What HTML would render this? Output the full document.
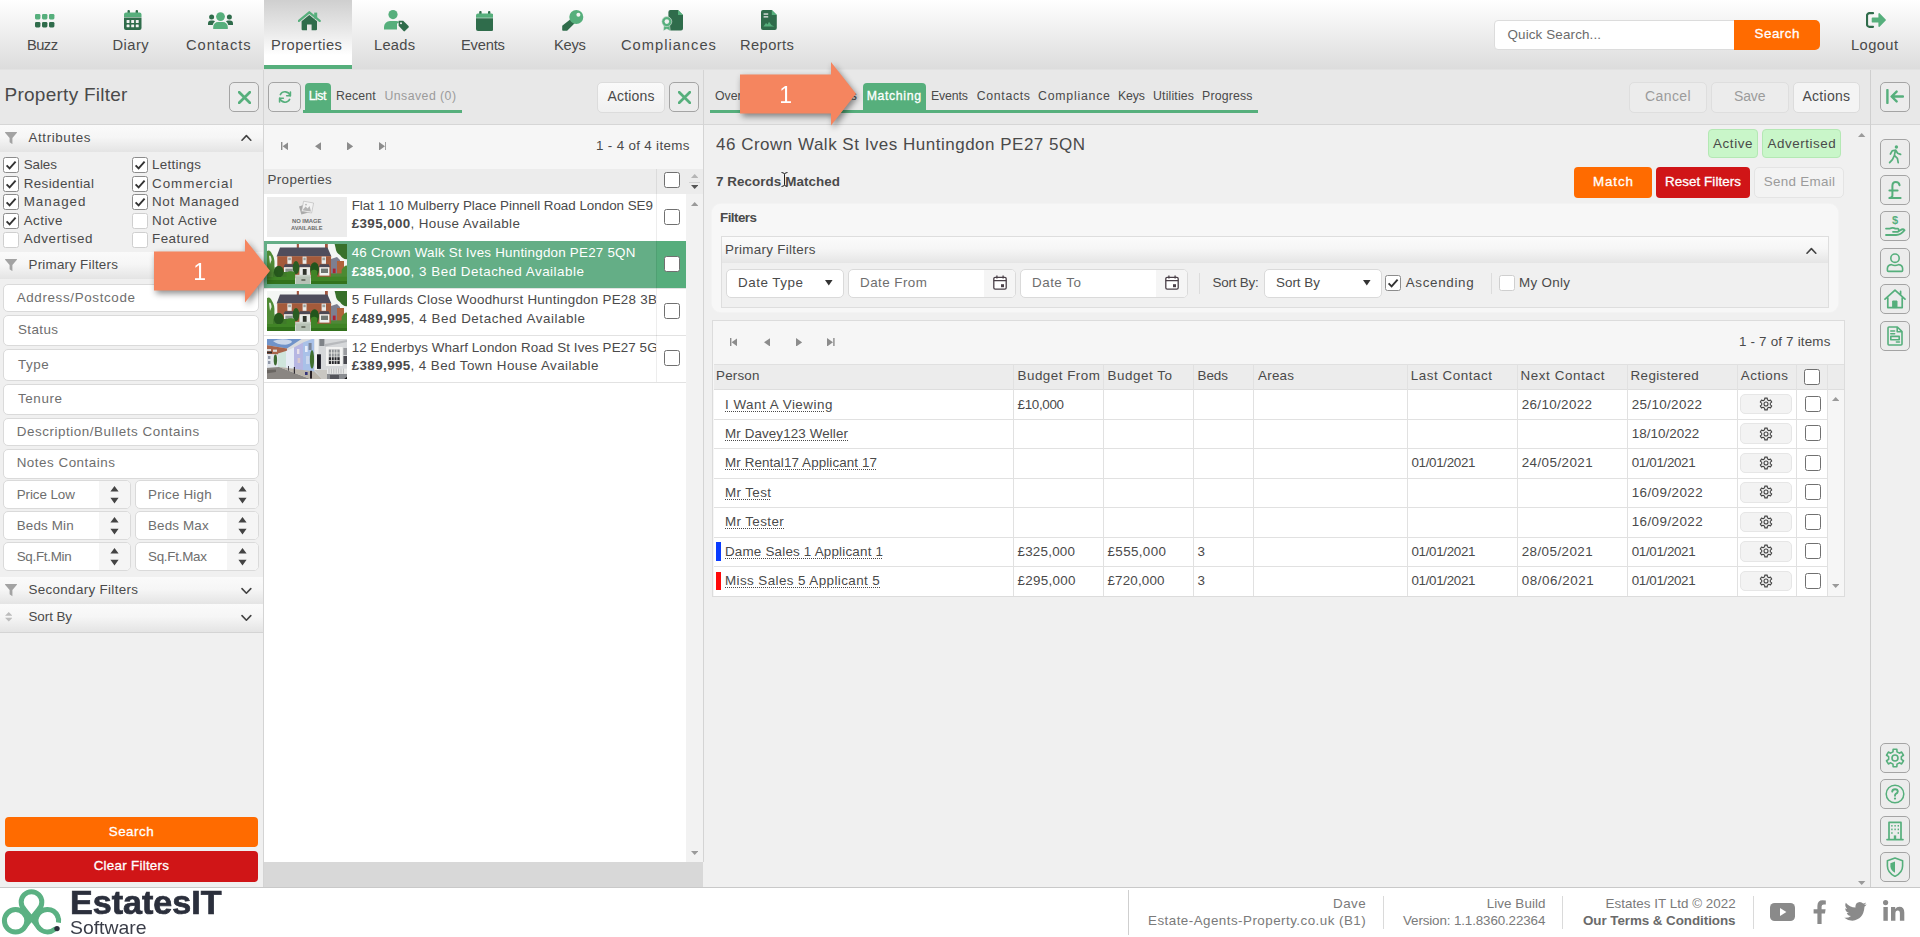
<!DOCTYPE html><html lang="en"><head><meta charset="utf-8"><title>Estates IT - Properties - Matching</title><style>
*{box-sizing:border-box;margin:0;padding:0}
html,body{width:1920px;height:937px;overflow:hidden;background:#f0f0f0;font-family:"Liberation Sans",sans-serif;color:#4a4a4a}
.a,.t,svg{position:absolute}
.t{white-space:pre;display:block}
.cb{position:absolute;width:16px;height:16px;background:#fff;border:1px solid #8c8c8c;border-radius:2.5px}
.cb.dk{border-color:#707070}
.cb.off{border-color:#cfcfcf}
.cb svg{left:1px;top:1px}
.btn{position:absolute;border-radius:5px;background:#f4f4f4;border:1px solid #dcdcdc}
.ib{position:absolute;width:30px;height:30px;border:1px solid #a4a4a4;border-radius:5px;background:#ececec}
.inp{position:absolute;background:#fff;border:1px solid #dadada;border-radius:5px}
.hd{position:absolute;left:0;width:263px;background:linear-gradient(#fafafa,#f6f6f6 45%,#e4e4e4)}
.spin{position:absolute;top:0;right:0;bottom:0;width:31px;background:#f5f5f5;border-radius:0 4px 4px 0}
.u{text-decoration:underline dotted;text-decoration-thickness:1px;text-underline-offset:2px}
</style></head><body>
<div class="a" style="left:0;top:0;width:1920px;height:69px;background:linear-gradient(#ffffff,#f6f6f6 25%,#dcdcdc 100%)"></div>
<div class="a" style="left:264px;top:0;width:88px;height:69px;background:linear-gradient(#cfcfcf,#e9e9e9 45%,#ffffff 80%)"></div>
<div class="a" style="left:264px;top:65px;width:88px;height:4px;background:#56af7c"></div>
<span class="t" style="left:27.0px;top:36px;font-size:14.7px;line-height:18px;letter-spacing:-0.56px;">Buzz</span>
<span class="t" style="left:112.5px;top:36px;font-size:14.7px;line-height:18px;letter-spacing:0.47px;">Diary</span>
<span class="t" style="left:186.0px;top:36px;font-size:14.7px;line-height:18px;letter-spacing:0.96px;">Contacts</span>
<span class="t" style="left:271.0px;top:36px;font-size:14.7px;line-height:18px;letter-spacing:0.44px;">Properties</span>
<span class="t" style="left:374.0px;top:36px;font-size:14.7px;line-height:18px;letter-spacing:0.24px;">Leads</span>
<span class="t" style="left:461.0px;top:36px;font-size:14.7px;line-height:18px;letter-spacing:-0.19px;">Events</span>
<span class="t" style="left:554.0px;top:36px;font-size:14.7px;line-height:18px;letter-spacing:-0.23px;">Keys</span>
<span class="t" style="left:621.0px;top:36px;font-size:14.7px;line-height:18px;letter-spacing:1.00px;">Compliances</span>
<span class="t" style="left:740.0px;top:36px;font-size:14.7px;line-height:18px;letter-spacing:0.42px;">Reports</span>
<span class="t" style="left:1851.0px;top:36px;font-size:14.7px;line-height:18px;letter-spacing:0.41px;">Logout</span>
<svg style="left:35px;top:14px" width="20" height="14" viewBox="0 0 20 14" ><rect x="0" y="0" width="5.4" height="5.4" rx="1.3" fill="#56af7c"/><rect x="7" y="0" width="5.4" height="5.4" rx="1.3" fill="#56af7c"/><rect x="14" y="0" width="5.4" height="5.4" rx="1.3" fill="#56af7c"/><rect x="0" y="8" width="5.4" height="5.4" rx="1.3" fill="#2f6c4b"/><rect x="7" y="8" width="5.4" height="5.4" rx="1.3" fill="#2f6c4b"/><rect x="14" y="8" width="5.4" height="5.4" rx="1.3" fill="#2f6c4b"/></svg>
<svg style="left:123.6px;top:10px" width="18" height="20" viewBox="0 0 18 20" ><rect x="3.5" y="0" width="2.4" height="5" rx="1" fill="#2f6c4b"/><rect x="11.6" y="0" width="2.4" height="5" rx="1" fill="#2f6c4b"/><path d="M0 4.5 a2 2 0 0 1 2 -2 h13.5 a2 2 0 0 1 2 2 v2.5 h-17.5z" fill="#56af7c"/><path d="M0 7.6 h17.5 v10.4 a2 2 0 0 1 -2 2 h-13.5 a2 2 0 0 1 -2 -2z" fill="#2f6c4b"/><rect x="2.6" y="10.0" width="2.9" height="2.9" rx=".5" fill="#f2f2f2"/><rect x="7.199999999999999" y="10.0" width="2.9" height="2.9" rx=".5" fill="#f2f2f2"/><rect x="11.799999999999999" y="10.0" width="2.9" height="2.9" rx=".5" fill="#f2f2f2"/><rect x="2.6" y="14.4" width="2.9" height="2.9" rx=".5" fill="#f2f2f2"/><rect x="7.199999999999999" y="14.4" width="2.9" height="2.9" rx=".5" fill="#f2f2f2"/><rect x="11.799999999999999" y="14.4" width="2.9" height="2.9" rx=".5" fill="#f2f2f2"/></svg>
<svg style="left:208px;top:11.5px" width="25" height="17" viewBox="0 0 25 17" ><circle cx="3.6" cy="5" r="2.5" fill="#2f6c4b"/><circle cx="21.4" cy="5" r="2.5" fill="#2f6c4b"/><path d="M0 13 v-1.5 a3 3 0 0 1 3 -3 h2 a3.5 3.5 0 0 1 2 .8 a6 6 0 0 0 -2.3 3.7z" fill="#2f6c4b"/><path d="M25 13 v-1.5 a3 3 0 0 0 -3 -3 h-2 a3.5 3.5 0 0 0 -2 .8 a6 6 0 0 1 2.3 3.7z" fill="#2f6c4b"/><circle cx="12.5" cy="4.6" r="4.4" fill="#56af7c"/><path d="M5.2 17 v-2 a5 5 0 0 1 5 -5 h4.6 a5 5 0 0 1 5 5 v2z" fill="#56af7c"/></svg>
<svg style="left:297.5px;top:10.5px" width="23" height="20" viewBox="0 0 23 20" ><rect x="16.2" y="1.6" width="3" height="6" fill="#56af7c"/><path d="M3.6 10.2 L11.3 3.9 L19 10.2 V18.3 a1 1 0 0 1 -1 1 H13.6 V13.6 H9 V19.3 H4.6 a1 1 0 0 1 -1 -1z" fill="#2f6c4b"/><path d="M.9 9.9 L11.3 1.3 L21.7 9.9" fill="none" stroke="#56af7c" stroke-width="2.3" stroke-linecap="round" stroke-linejoin="round"/></svg>
<svg style="left:383.7px;top:9.8px" width="26" height="22" viewBox="0 0 26 22" ><circle cx="9" cy="4.6" r="4.6" fill="#56af7c"/><path d="M0 19.5 v-2.5 a6 6 0 0 1 6 -6 h6 a6 6 0 0 1 3.2 1 L13 13.8 v5.7z" fill="#56af7c"/><path d="M14.6 10.8 h4.6 l5.3 5.3 a1 1 0 0 1 0 1.4 l-3.6 3.6 a1 1 0 0 1 -1.4 0 l-4.9 -5.3z" fill="#2f6c4b"/><circle cx="17" cy="13.2" r="1" fill="#eee"/></svg>
<svg style="left:475.6px;top:10.6px" width="17.6" height="20" viewBox="0 0 17.6 20" ><rect x="3.2" y="0" width="2.4" height="5" rx="1" fill="#2f6c4b"/><rect x="12" y="0" width="2.4" height="5" rx="1" fill="#2f6c4b"/><path d="M0 4.6 a2 2 0 0 1 2 -2 h13.6 a2 2 0 0 1 2 2 v2.2 h-17.6z" fill="#56af7c"/><path d="M0 7.2 h17.6 v10.8 a2 2 0 0 1 -2 2 h-13.6 a2 2 0 0 1 -2 -2z" fill="#2f6c4b"/></svg>
<svg style="left:562px;top:9.6px" width="21.5" height="21" viewBox="0 0 21.5 21" ><path d="M9.4 8.6 l4 4 l-8 7.8 a1 1 0 0 1 -.7 .3 h-3.7 a.8 .8 0 0 1 -.8 -.8 v-3.6 a1 1 0 0 1 .3 -.7z" fill="#2f6c4b"/><circle cx="14.3" cy="7" r="7" fill="#56af7c"/><circle cx="16.4" cy="4.8" r="2" fill="#f4f4f4"/></svg>
<svg style="left:660.6px;top:10px" width="22" height="21" viewBox="0 0 22 21" ><path d="M7.4 2 a2 2 0 0 1 2 -2 h7.6 l5 5 v13.5 a2 2 0 0 1 -2 2 h-10.6 a2 2 0 0 1 -2 -2z" fill="#2f6c4b"/><path d="M17 0 l5 5 h-5z" fill="#56af7c"/><path d="M3.2 14 l-.9 6.8 l3.5 -1.7 l3.5 1.7 l-.9 -6.8z" fill="#56af7c" stroke="#e6e6e6" stroke-width=".5"/><circle cx="5.8" cy="11.6" r="5" fill="#56af7c" stroke="#e6e6e6" stroke-width=".6"/><circle cx="5.8" cy="11.6" r="2.3" fill="#f0f0f0"/></svg>
<svg style="left:761px;top:10px" width="16" height="20" viewBox="0 0 16 20" ><path d="M0 2 a2 2 0 0 1 2 -2 h8.8 l5 5 v13 a2 2 0 0 1 -2 2 h-11.8 a2 2 0 0 1 -2 -2z" fill="#2f6c4b"/><path d="M10.8 0 l5 5 h-5z" fill="#56af7c"/><rect x="2.6" y="3.4" width="4.6" height="1.3" fill="#e8e8e8"/><rect x="2.6" y="6.2" width="4.6" height="1.3" fill="#e8e8e8"/><path d="M2.4 16.6 l2.6 -3.6 l1.6 1.6 l1.4 -2.8 l2.6 3.4 l2.8 1.4z" fill="#56af7c"/></svg>
<svg style="left:1866px;top:12.2px" width="20.5" height="16" viewBox="0 0 20.5 16" ><path d="M7 1.2 H3.4 a2.4 2.4 0 0 0 -2.4 2.4 v8.8 a2.4 2.4 0 0 0 2.4 2.4 H7" fill="none" stroke="#2f6c4b" stroke-width="2.2" stroke-linecap="round"/><path d="M6.6 5.4 h5.8 v-3.6 a.7 .7 0 0 1 1.2 -.5 l6.1 6.1 a.9 .9 0 0 1 0 1.2 l-6.1 6.1 a.7 .7 0 0 1 -1.2 -.5 v-3.6 h-5.8 a.9 .9 0 0 1 -.9 -.9 v-3.4 a.9 .9 0 0 1 .9 -.9z" fill="#56af7c"/></svg>
<div class="a" style="left:1494px;top:20px;width:241px;height:30px;background:#fff;border:1px solid #dcdcdc;border-radius:4px 0 0 4px"></div>
<span class="t" style="left:1507.5px;top:26px;font-size:13.4px;line-height:17px;letter-spacing:0.14px;color:#6b6b6b;">Quick Search...</span>
<div class="a" style="left:1734px;top:20px;width:86px;height:30px;background:#ff6b00;border-radius:0 5px 5px 0"></div>
<span class="t" style="left:1754.5px;top:25px;font-size:13.4px;line-height:17px;letter-spacing:0.51px;-webkit-text-stroke:.3px;color:#fff;">Search</span>
<div class="a" style="left:0;top:69px;width:1920px;height:56px;background:#e8e8e8;border-top:1px solid #e2e2e2;border-bottom:1px solid #d6d6d6"></div>
<span class="t" style="left:4.5px;top:83px;font-size:19px;line-height:24px;letter-spacing:0.26px;">Property Filter</span>
<div class="ib" style="left:229px;top:82px"><svg style="left:8px;top:8px" width="13" height="13" viewBox="0 0 13 13"><path d="M1.2 1.2 L11.8 11.8 M11.8 1.2 L1.2 11.8" stroke="#56af7c" stroke-width="2.7" stroke-linecap="round"/></svg></div>
<div class="ib" style="left:268px;top:82px;width:33px"><svg style="left:8.5px;top:6.5px" width="14" height="14" viewBox="-.5 -.5 15 15" fill="none" stroke="#56af7c" stroke-width="1.7" stroke-linecap="round" stroke-linejoin="round"><path d="M12.6 5.6 A5.8 5.8 0 0 0 2 4.4 M1.4 8.4 A5.8 5.8 0 0 0 12 9.6"/><path d="M12.8 1.6 v4 h-4 M1.2 12.4 v-4 h4"/></svg></div>
<div class="a" style="left:303px;top:110px;width:159px;height:3px;background:#56af7c"></div>
<div class="a" style="left:304.5px;top:83px;width:26.5px;height:28px;background:#56af7c;border-radius:4px 4px 0 0"></div>
<span class="t" style="left:308.7px;top:89px;font-size:12.3px;line-height:15px;letter-spacing:-0.51px;-webkit-text-stroke:.3px;color:#fff;">List</span>
<span class="t" style="left:336.0px;top:89px;font-size:12.3px;line-height:15px;letter-spacing:0.15px;">Recent</span>
<span class="t" style="left:384.5px;top:89px;font-size:12.3px;line-height:15px;letter-spacing:0.45px;color:#9b9b9b;">Unsaved (0)</span>
<div class="btn" style="left:597px;top:81.5px;width:67.5px;background:linear-gradient(#fafafa,#f0f0f0);height:31px"></div>
<span class="t" style="left:607.5px;top:87px;font-size:14px;line-height:18px;letter-spacing:0.18px;">Actions</span>
<div class="ib" style="left:669px;top:82px"><svg style="left:8px;top:8px" width="13" height="13" viewBox="0 0 13 13"><path d="M1.2 1.2 L11.8 11.8 M11.8 1.2 L1.2 11.8" stroke="#56af7c" stroke-width="2.7" stroke-linecap="round"/></svg></div>
<div class="a" style="left:710px;top:110px;width:547.5px;height:3px;background:#56af7c"></div>
<div class="a" style="left:863px;top:83px;width:62.7px;height:28px;background:#56af7c;border-radius:4px 4px 0 0"></div>
<span class="t" style="left:715.0px;top:89px;font-size:12.3px;line-height:15px;letter-spacing:-0.04px;">Overview</span>
<span class="t" style="left:774.0px;top:89px;font-size:12.3px;line-height:15px;letter-spacing:0.23px;">Details</span>
<span class="t" style="left:821.0px;top:89px;font-size:12.3px;line-height:15px;letter-spacing:-0.74px;">Rooms</span>
<span class="t" style="left:931.0px;top:89px;font-size:12.3px;line-height:15px;letter-spacing:-0.12px;">Events</span>
<span class="t" style="left:976.7px;top:89px;font-size:12.3px;line-height:15px;letter-spacing:0.68px;">Contacts</span>
<span class="t" style="left:1038.0px;top:89px;font-size:12.3px;line-height:15px;letter-spacing:0.78px;">Compliance</span>
<span class="t" style="left:1118.0px;top:89px;font-size:12.3px;line-height:15px;letter-spacing:-0.12px;">Keys</span>
<span class="t" style="left:1153.0px;top:89px;font-size:12.3px;line-height:15px;letter-spacing:0.17px;">Utilities</span>
<span class="t" style="left:1202.0px;top:89px;font-size:12.3px;line-height:15px;letter-spacing:0.18px;">Progress</span>
<span class="t" style="left:866.7px;top:89px;font-size:12.3px;line-height:15px;letter-spacing:0.63px;-webkit-text-stroke:.3px;color:#fff;">Matching</span>
<div class="btn" style="left:1629px;top:81.5px;width:78px;height:31px;background:#ececec;border-color:#dedede"></div>
<span class="t" style="left:1645.0px;top:87px;font-size:14px;line-height:18px;letter-spacing:0.42px;color:#9b9b9b;">Cancel</span>
<div class="btn" style="left:1710.7px;top:81.5px;width:78.29999999999995px;height:31px;background:#ececec;border-color:#dedede"></div>
<span class="t" style="left:1734.0px;top:87px;font-size:14px;line-height:18px;letter-spacing:-0.14px;color:#9b9b9b;">Save</span>
<div class="btn" style="left:1792.5px;top:81.5px;width:67.0px;height:31px;"></div>
<span class="t" style="left:1802.5px;top:87px;font-size:14px;line-height:18px;letter-spacing:0.26px;">Actions</span>
<div class="a" style="left:263px;top:70px;width:1px;height:817px;background:#d4d4d4"></div>
<div class="a" style="left:703px;top:70px;width:1px;height:792px;background:#d4d4d4"></div>
<div class="a" style="left:1870px;top:70px;width:1px;height:817px;background:#cfcfcf"></div>
<div class="hd" style="top:125px;height:27px"></div>
<svg style="left:4.5px;top:131.70000000000002px" width="12" height="12.5" viewBox="0 0 12 12.5" ><path d="M.4 0 h11.2 a.4 .4 0 0 1 .3 .7 L7.4 6 v6.2 l-2.8 -2 V6 L.1 .7 A.4 .4 0 0 1 .4 0z" fill="#a3a3a3"/></svg>
<span class="t" style="left:28.5px;top:129px;font-size:13.4px;line-height:17px;letter-spacing:0.60px;">Attributes</span>
<svg style="left:240.5px;top:133.70000000000002px" width="11" height="8" viewBox="0 0 11 8"><path d="M1 6.2 L5.4 1.6 L9.8 6.2" fill="none" stroke="#444" stroke-width="1.6" stroke-linecap="round" stroke-linejoin="round"/></svg>
<div class="cb" style="left:3px;top:157.0px"><svg width="12" height="12" viewBox="0 0 12 12"><path d="M1.6 6.4 L4.6 9.4 L10.6 2.6" fill="none" stroke="#333" stroke-width="1.9"/></svg></div>
<span class="t" style="left:23.7px;top:156px;font-size:13.4px;line-height:17px;letter-spacing:-0.06px;">Sales</span>
<div class="cb" style="left:132px;top:157.0px"><svg width="12" height="12" viewBox="0 0 12 12"><path d="M1.6 6.4 L4.6 9.4 L10.6 2.6" fill="none" stroke="#333" stroke-width="1.9"/></svg></div>
<span class="t" style="left:152.0px;top:156px;font-size:13.4px;line-height:17px;letter-spacing:0.30px;">Lettings</span>
<div class="cb" style="left:3px;top:175.5px"><svg width="12" height="12" viewBox="0 0 12 12"><path d="M1.6 6.4 L4.6 9.4 L10.6 2.6" fill="none" stroke="#333" stroke-width="1.9"/></svg></div>
<span class="t" style="left:23.7px;top:175px;font-size:13.4px;line-height:17px;letter-spacing:0.40px;">Residential</span>
<div class="cb" style="left:132px;top:175.5px"><svg width="12" height="12" viewBox="0 0 12 12"><path d="M1.6 6.4 L4.6 9.4 L10.6 2.6" fill="none" stroke="#333" stroke-width="1.9"/></svg></div>
<span class="t" style="left:152.0px;top:175px;font-size:13.4px;line-height:17px;letter-spacing:1.00px;">Commercial</span>
<div class="cb" style="left:3px;top:194.0px"><svg width="12" height="12" viewBox="0 0 12 12"><path d="M1.6 6.4 L4.6 9.4 L10.6 2.6" fill="none" stroke="#333" stroke-width="1.9"/></svg></div>
<span class="t" style="left:23.7px;top:193px;font-size:13.4px;line-height:17px;letter-spacing:0.99px;">Managed</span>
<div class="cb" style="left:132px;top:194.0px"><svg width="12" height="12" viewBox="0 0 12 12"><path d="M1.6 6.4 L4.6 9.4 L10.6 2.6" fill="none" stroke="#333" stroke-width="1.9"/></svg></div>
<span class="t" style="left:152.0px;top:193px;font-size:13.4px;line-height:17px;letter-spacing:0.65px;">Not Managed</span>
<div class="cb" style="left:3px;top:213.0px"><svg width="12" height="12" viewBox="0 0 12 12"><path d="M1.6 6.4 L4.6 9.4 L10.6 2.6" fill="none" stroke="#333" stroke-width="1.9"/></svg></div>
<span class="t" style="left:23.7px;top:212px;font-size:13.4px;line-height:17px;letter-spacing:0.46px;">Active</span>
<div class="cb off" style="left:132px;top:213.0px"></div>
<span class="t" style="left:152.0px;top:212px;font-size:13.4px;line-height:17px;letter-spacing:0.52px;">Not Active</span>
<div class="cb off" style="left:3px;top:231.5px"></div>
<span class="t" style="left:23.7px;top:230px;font-size:13.4px;line-height:17px;letter-spacing:0.61px;">Advertised</span>
<div class="cb off" style="left:132px;top:231.5px"></div>
<span class="t" style="left:152.0px;top:230px;font-size:13.4px;line-height:17px;letter-spacing:0.48px;">Featured</span>
<div class="hd" style="top:251.5px;height:27px"></div>
<svg style="left:4.5px;top:258.79999999999995px" width="12" height="12.5" viewBox="0 0 12 12.5" ><path d="M.4 0 h11.2 a.4 .4 0 0 1 .3 .7 L7.4 6 v6.2 l-2.8 -2 V6 L.1 .7 A.4 .4 0 0 1 .4 0z" fill="#a3a3a3"/></svg>
<span class="t" style="left:28.5px;top:256px;font-size:13.4px;line-height:17px;letter-spacing:0.22px;">Primary Filters</span>
<div class="inp" style="left:3px;top:283.5px;width:256px;height:28.5px"></div>
<span class="t" style="left:16.7px;top:289px;font-size:13.4px;line-height:17px;letter-spacing:0.64px;color:#6e6e6e;">Address/Postcode</span>
<div class="inp" style="left:3px;top:314.5px;width:256px;height:31.5px"></div>
<span class="t" style="left:18.0px;top:321px;font-size:13.4px;line-height:17px;letter-spacing:0.40px;color:#6e6e6e;">Status</span>
<div class="inp" style="left:3px;top:349px;width:256px;height:32px"></div>
<span class="t" style="left:18.0px;top:356px;font-size:13.4px;line-height:17px;letter-spacing:0.55px;color:#6e6e6e;">Type</span>
<div class="inp" style="left:3px;top:383.5px;width:256px;height:31.5px"></div>
<span class="t" style="left:18.0px;top:390px;font-size:13.4px;line-height:17px;letter-spacing:0.61px;color:#6e6e6e;">Tenure</span>
<div class="inp" style="left:3px;top:417.7px;width:256px;height:28.80000000000001px"></div>
<span class="t" style="left:16.7px;top:423px;font-size:13.4px;line-height:17px;letter-spacing:0.56px;color:#6e6e6e;">Description/Bullets Contains</span>
<div class="inp" style="left:3px;top:448.5px;width:256px;height:30.0px"></div>
<span class="t" style="left:16.7px;top:454px;font-size:13.4px;line-height:17px;letter-spacing:0.51px;color:#6e6e6e;">Notes Contains</span>
<div class="inp" style="left:3px;top:480.0px;width:128px;height:29px"><div class="spin"><svg style="left:10.6px;top:4.6px" width="9" height="18" viewBox="0 0 9 18"><path d="M4.5 0 L8.6 5.6 H.4z M4.5 17.4 L8.6 11.8 H.4z" fill="#444"/></svg></div></div>
<div class="inp" style="left:135px;top:480.0px;width:124px;height:29px"><div class="spin"><svg style="left:10.6px;top:4.6px" width="9" height="18" viewBox="0 0 9 18"><path d="M4.5 0 L8.6 5.6 H.4z M4.5 17.4 L8.6 11.8 H.4z" fill="#444"/></svg></div></div>
<span class="t" style="left:16.7px;top:486px;font-size:13.4px;line-height:17px;letter-spacing:-0.07px;color:#6e6e6e;">Price Low</span>
<span class="t" style="left:148.0px;top:486px;font-size:13.4px;line-height:17px;letter-spacing:0.21px;color:#6e6e6e;">Price High</span>
<div class="inp" style="left:3px;top:511.2px;width:128px;height:29px"><div class="spin"><svg style="left:10.6px;top:4.6px" width="9" height="18" viewBox="0 0 9 18"><path d="M4.5 0 L8.6 5.6 H.4z M4.5 17.4 L8.6 11.8 H.4z" fill="#444"/></svg></div></div>
<div class="inp" style="left:135px;top:511.2px;width:124px;height:29px"><div class="spin"><svg style="left:10.6px;top:4.6px" width="9" height="18" viewBox="0 0 9 18"><path d="M4.5 0 L8.6 5.6 H.4z M4.5 17.4 L8.6 11.8 H.4z" fill="#444"/></svg></div></div>
<span class="t" style="left:16.7px;top:517px;font-size:13.4px;line-height:17px;letter-spacing:0.16px;color:#6e6e6e;">Beds Min</span>
<span class="t" style="left:148.0px;top:517px;font-size:13.4px;line-height:17px;letter-spacing:0.16px;color:#6e6e6e;">Beds Max</span>
<div class="inp" style="left:3px;top:542.2px;width:128px;height:29px"><div class="spin"><svg style="left:10.6px;top:4.6px" width="9" height="18" viewBox="0 0 9 18"><path d="M4.5 0 L8.6 5.6 H.4z M4.5 17.4 L8.6 11.8 H.4z" fill="#444"/></svg></div></div>
<div class="inp" style="left:135px;top:542.2px;width:124px;height:29px"><div class="spin"><svg style="left:10.6px;top:4.6px" width="9" height="18" viewBox="0 0 9 18"><path d="M4.5 0 L8.6 5.6 H.4z M4.5 17.4 L8.6 11.8 H.4z" fill="#444"/></svg></div></div>
<span class="t" style="left:16.7px;top:548px;font-size:13.4px;line-height:17px;letter-spacing:-0.29px;color:#6e6e6e;">Sq.Ft.Min</span>
<span class="t" style="left:148.0px;top:548px;font-size:13.4px;line-height:17px;letter-spacing:-0.26px;color:#6e6e6e;">Sq.Ft.Max</span>
<div class="hd" style="top:576.5px;height:27px"></div>
<svg style="left:4.5px;top:584.3px" width="12" height="12.5" viewBox="0 0 12 12.5" ><path d="M.4 0 h11.2 a.4 .4 0 0 1 .3 .7 L7.4 6 v6.2 l-2.8 -2 V6 L.1 .7 A.4 .4 0 0 1 .4 0z" fill="#a3a3a3"/></svg>
<span class="t" style="left:28.5px;top:581px;font-size:13.4px;line-height:17px;letter-spacing:0.33px;">Secondary Filters</span>
<svg style="left:240.5px;top:586.6999999999999px" width="11" height="8" viewBox="0 0 11 8"><path d="M1 1.6 L5.4 6.2 L9.8 1.6" fill="none" stroke="#444" stroke-width="1.6" stroke-linecap="round" stroke-linejoin="round"/></svg>
<div class="hd" style="top:603.5px;height:28px"></div>
<svg style="left:4.5px;top:612.1px" width="7.5" height="9.6" viewBox="0 0 7.5 9.6" ><path d="M3.75 0 L7.5 3.8 H0z M3.75 9.6 L7.5 5.8 H0z" fill="#bdbdbd"/></svg>
<span class="t" style="left:28.5px;top:608px;font-size:13.4px;line-height:17px;letter-spacing:-0.07px;">Sort By</span>
<svg style="left:240.5px;top:613.5px" width="11" height="8" viewBox="0 0 11 8"><path d="M1 1.6 L5.4 6.2 L9.8 1.6" fill="none" stroke="#444" stroke-width="1.6" stroke-linecap="round" stroke-linejoin="round"/></svg>
<div class="a" style="left:0;top:631.5px;width:263px;height:1px;background:#d4d4d4"></div>
<div class="a" style="left:5px;top:816.7px;width:253px;height:30.5px;background:#ff6b00;border-radius:4px"></div>
<span class="t" style="left:108.7px;top:823px;font-size:13.4px;line-height:17px;letter-spacing:0.51px;-webkit-text-stroke:.3px;color:#fff;">Search</span>
<div class="a" style="left:5px;top:851px;width:253px;height:31px;background:#d01517;border-radius:4px"></div>
<span class="t" style="left:93.7px;top:857px;font-size:13.4px;line-height:17px;letter-spacing:0.26px;-webkit-text-stroke:.3px;color:#fff;">Clear Filters</span>
<div class="a" style="left:264px;top:125px;width:439px;height:43.5px;background:#f6f6f6"></div>
<svg style="left:280.5px;top:141.5px" width="7.6" height="8.6" viewBox="0 0 7.6 8.6" ><rect x="0" y="0" width="1.4" height="8.6" fill="#8c8c8c"/><path d="M7.6 0 V8.6 L1.6 4.3z" fill="#8c8c8c"/></svg><svg style="left:314.5px;top:141.5px" width="6.2" height="8.6" viewBox="0 0 6.2 8.6" ><path d="M6.2 0 V8.6 L0 4.3z" fill="#8c8c8c"/></svg><svg style="left:347px;top:141.5px" width="6.2" height="8.6" viewBox="0 0 6.2 8.6" ><path d="M0 0 V8.6 L6.2 4.3z" fill="#8c8c8c"/></svg><svg style="left:378.6px;top:141.5px" width="7.6" height="8.6" viewBox="0 0 7.6 8.6" ><rect x="6.2" y="0" width="1.4" height="8.6" fill="#8c8c8c"/><path d="M0 0 V8.6 L6 4.3z" fill="#8c8c8c"/></svg>
<span class="t" style="left:596.0px;top:137px;font-size:13.4px;line-height:17px;letter-spacing:0.32px;">1 - 4 of 4 items</span>
<div class="a" style="left:264px;top:168.5px;width:439px;height:25.5px;background:#ececec"></div>
<span class="t" style="left:267.5px;top:171px;font-size:13.4px;line-height:17px;letter-spacing:0.35px;">Properties</span>
<div class="a" style="left:264px;top:194px;width:422px;height:668px;background:#fff"></div>
<div class="a" style="left:686px;top:194px;width:17px;height:668px;background:#f2f2f2"></div>
<div class="a" style="left:264px;top:862px;width:439px;height:25.5px;background:#d8d8d8"></div>
<div class="a" style="left:264px;top:241px;width:422px;height:47px;background:#64ae86"></div>
<div class="a" style="left:656px;top:241px;width:30px;height:47px;background:#56ad7c"></div>
<div class="a" style="left:264px;top:287.5px;width:422px;height:1px;background:#e2e2e2"></div>
<div class="a" style="left:264px;top:334.5px;width:422px;height:1px;background:#e2e2e2"></div>
<div class="a" style="left:264px;top:381.5px;width:422px;height:1px;background:#e2e2e2"></div>
<div class="a" style="left:656px;top:168.5px;width:1px;height:213.5px;background:rgba(0,0,0,.07)"></div>
<div class="cb dk" style="left:664px;top:172px"></div>
<svg style="left:690.6px;top:174px" width="7.4" height="4" viewBox="0 0 7.4 4" ><path d="M0 4 L3.7 0 L7.4 4z" fill="#b5b5b5"/></svg>
<svg style="left:690.6px;top:185px" width="7.4" height="4" viewBox="0 0 7.4 4" ><path d="M0 0 L3.7 4 L7.4 0z" fill="#555"/></svg>
<div class="a" style="left:689px;top:181.5px;width:10.5px;height:1px;background:#d2d2d2"></div>
<svg style="left:690.6px;top:202px" width="7.4" height="4" viewBox="0 0 7.4 4" ><path d="M0 4 L3.7 0 L7.4 4z" fill="#9a9a9a"/></svg>
<svg style="left:690.6px;top:851px" width="7.4" height="4" viewBox="0 0 7.4 4" ><path d="M0 0 L3.7 4 L7.4 0z" fill="#9a9a9a"/></svg>
<div class="cb dk" style="left:664px;top:208.5px"></div>
<div class="cb dk" style="left:664px;top:255.5px"></div>
<div class="cb dk" style="left:664px;top:302.5px"></div>
<div class="cb dk" style="left:664px;top:350px"></div>
<svg style="left:267px;top:197px" width="80" height="40" viewBox="0 0 80 40" ><rect width="80" height="40" fill="#ececec"/><g transform="translate(31,3)"><path d="M1 6.4 L9.6 3.6 L12.4 12 L3.4 14.6z" fill="#a9a9a9"/><path d="M5.6 1.2 L15.6 3 L13.6 13 L3.6 11.2z" fill="#f2f2f2" stroke="#b5b5b5" stroke-width=".6"/><path d="M5 9.6 L7.6 6.6 L9.6 8.4 L11.6 6 L13 11.4 L5.2 10.4z" fill="#b5b5b5"/><circle cx="8" cy="4.6" r=".9" fill="#b5b5b5"/></g><text x="25" y="26" textLength="29.5" lengthAdjust="spacingAndGlyphs" font-family="Liberation Sans, sans-serif" font-size="5.6" font-weight="700" fill="#6b6b6b">NO IMAGE</text><text x="24" y="32.6" textLength="31.6" lengthAdjust="spacingAndGlyphs" font-family="Liberation Sans, sans-serif" font-size="5.6" font-weight="700" fill="#6b6b6b">AVAILABLE</text></svg>
<svg style="left:267px;top:244px" width="80" height="40" viewBox="0 0 80 40" ><filter id="bl" x="0" y="0" width="1" height="1"><feGaussianBlur stdDeviation=".35"/></filter><g filter="url(#bl)"><rect x="-2" y="-2" width="84" height="44" fill="#f4f6f4"/><rect x="29.8" y="-1" width="2.1" height="6" fill="#a2553f"/><rect x="58" y="-1" width="2.8" height="6" fill="#a2553f"/><path d="M9.6 12.6 L13 3.6 H60.5 L64.4 12.6z" fill="#504e5c"/><rect x="10.3" y="12.2" width="53.8" height="22" fill="#a45a3b"/><path d="M64 15 L70 13 L73 16 V34 H64z" fill="#7d7f90"/><rect x="70" y="17" width="7" height="17" fill="#b0623a"/><rect x="64" y="29.4" width="17" height="5" fill="#4f8838"/><rect x="65.8" y="24.6" width="2.8" height="4.6" fill="#ae2233"/><rect x="20.4" y="12.6" width="4.3" height="7.2" fill="#e9ecea"/><rect x="21.2" y="13.6" width="2.6999999999999997" height="2.6" fill="#9aa09c"/><rect x="35.6" y="12.6" width="3.9" height="7.2" fill="#e9ecea"/><rect x="36.4" y="13.6" width="2.3" height="2.6" fill="#9aa09c"/><rect x="54.6" y="12.6" width="4.4" height="7.2" fill="#e9ecea"/><rect x="55.4" y="13.6" width="2.8000000000000003" height="2.6" fill="#9aa09c"/><path d="M16.4 23.2 L18 20.2 H26.6 L28 23.2z M51.8 23.2 L53 20.2 H61.6 L63 23.2z M31 23.2 L33 20.2 H42.6 L44.2 23.2z" fill="#4b4956"/><rect x="17" y="23.2" width="10.4" height="8.4" fill="#eef1ef"/><rect x="52.4" y="23.2" width="10" height="8.4" fill="#eef1ef"/><rect x="18.4" y="24.6" width="7.4" height="4.2" fill="#8d948f"/><rect x="54" y="24.6" width="7" height="4.4" fill="#6f7672"/><rect x="32.4" y="23.2" width="10.8" height="10" fill="#e8ebe8"/><rect x="35.8" y="25" width="3.8" height="7.6" fill="#2e3029"/><path d="M0 7 Q3 5 5 10 Q8 14 7.4 22 Q9 30 7 40 H0z" fill="#4f8a34"/><path d="M2 12 Q4 10 4.6 16 L3 20z" fill="#e4ebe0"/><path d="M67.4 -1 H81 V15 Q76 16 73 11 Q69 9 68.6 4z" fill="#38702a"/><path d="M74.6 26 Q78 20 81 22 V34 H74.6z" fill="#4c8a30"/><ellipse cx="29" cy="23.6" rx="3.3" ry="6.6" fill="#2a5c20"/><ellipse cx="47.6" cy="25.6" rx="4.4" ry="7.4" fill="#24551c"/><rect x="6" y="28" width="14" height="6" fill="#3f7a2a"/><ellipse cx="11.8" cy="27.6" rx="4.9" ry="5.8" fill="#27591f"/><path d="M0 33 H19.4 V28.6 Q23.6 26 28 28.6 V40.5 H0z" fill="#3f8426"/><path d="M44 40.5 V27 Q47 24.6 50.3 27 V32.8 H81 V40.5z" fill="#3f8426"/><path d="M0 36 H28 V40.5 H0z M44 37 H81 V40.5 H44z" fill="#33721e"/><rect x="28.2" y="30.8" width="15.6" height="9.8" fill="#c9d2c8"/><path d="M30 40.5 v-8 M32 40.5 v-8 M34 40.5 v-8 M36 40.5 v-8 M38 40.5 v-8 M40 40.5 v-8 M42 40.5 v-8" stroke="#97a895" stroke-width=".7"/><rect x="34.4" y="35" width="4" height="2" fill="#6d7468"/></g></svg>
<svg style="left:267px;top:291px" width="80" height="40" viewBox="0 0 80 40" ><g filter="url(#bl)"><rect x="-2" y="-2" width="84" height="44" fill="#f4f6f4"/><rect x="29.8" y="-1" width="2.1" height="6" fill="#a2553f"/><rect x="58" y="-1" width="2.8" height="6" fill="#a2553f"/><path d="M9.6 12.6 L13 3.6 H60.5 L64.4 12.6z" fill="#504e5c"/><rect x="10.3" y="12.2" width="53.8" height="22" fill="#a45a3b"/><path d="M64 15 L70 13 L73 16 V34 H64z" fill="#7d7f90"/><rect x="70" y="17" width="7" height="17" fill="#b0623a"/><rect x="64" y="29.4" width="17" height="5" fill="#4f8838"/><rect x="65.8" y="24.6" width="2.8" height="4.6" fill="#ae2233"/><rect x="20.4" y="12.6" width="4.3" height="7.2" fill="#e9ecea"/><rect x="21.2" y="13.6" width="2.6999999999999997" height="2.6" fill="#9aa09c"/><rect x="35.6" y="12.6" width="3.9" height="7.2" fill="#e9ecea"/><rect x="36.4" y="13.6" width="2.3" height="2.6" fill="#9aa09c"/><rect x="54.6" y="12.6" width="4.4" height="7.2" fill="#e9ecea"/><rect x="55.4" y="13.6" width="2.8000000000000003" height="2.6" fill="#9aa09c"/><path d="M16.4 23.2 L18 20.2 H26.6 L28 23.2z M51.8 23.2 L53 20.2 H61.6 L63 23.2z M31 23.2 L33 20.2 H42.6 L44.2 23.2z" fill="#4b4956"/><rect x="17" y="23.2" width="10.4" height="8.4" fill="#eef1ef"/><rect x="52.4" y="23.2" width="10" height="8.4" fill="#eef1ef"/><rect x="18.4" y="24.6" width="7.4" height="4.2" fill="#8d948f"/><rect x="54" y="24.6" width="7" height="4.4" fill="#6f7672"/><rect x="32.4" y="23.2" width="10.8" height="10" fill="#e8ebe8"/><rect x="35.8" y="25" width="3.8" height="7.6" fill="#2e3029"/><path d="M0 7 Q3 5 5 10 Q8 14 7.4 22 Q9 30 7 40 H0z" fill="#4f8a34"/><path d="M2 12 Q4 10 4.6 16 L3 20z" fill="#e4ebe0"/><path d="M67.4 -1 H81 V15 Q76 16 73 11 Q69 9 68.6 4z" fill="#38702a"/><path d="M74.6 26 Q78 20 81 22 V34 H74.6z" fill="#4c8a30"/><ellipse cx="29" cy="23.6" rx="3.3" ry="6.6" fill="#2a5c20"/><ellipse cx="47.6" cy="25.6" rx="4.4" ry="7.4" fill="#24551c"/><rect x="6" y="28" width="14" height="6" fill="#3f7a2a"/><ellipse cx="11.8" cy="27.6" rx="4.9" ry="5.8" fill="#27591f"/><path d="M0 33 H19.4 V28.6 Q23.6 26 28 28.6 V40.5 H0z" fill="#3f8426"/><path d="M44 40.5 V27 Q47 24.6 50.3 27 V32.8 H81 V40.5z" fill="#3f8426"/><path d="M0 36 H28 V40.5 H0z M44 37 H81 V40.5 H44z" fill="#33721e"/><rect x="28.2" y="30.8" width="15.6" height="9.8" fill="#c9d2c8"/><path d="M30 40.5 v-8 M32 40.5 v-8 M34 40.5 v-8 M36 40.5 v-8 M38 40.5 v-8 M40 40.5 v-8 M42 40.5 v-8" stroke="#97a895" stroke-width=".7"/><rect x="34.4" y="35" width="4" height="2" fill="#6d7468"/></g></svg>
<svg style="left:267px;top:339px" width="80" height="40" viewBox="0 0 80 40" ><g filter="url(#bl)"><rect x="-2" y="-2" width="84" height="44" fill="#d9dbdd"/><path d="M-1 -1 H36 L20 9.6 L-1 6z" fill="#6f93c9"/><path d="M6 2 Q14 -1 24 1.4 Q27 3.4 20 5.6 Q10 6 6 2z" fill="#c9d6ea"/><path d="M-1 6 L20 9.6 V16 L-1 15z" fill="#a9654c"/><rect x="0" y="10" width="4" height="2.2" fill="#dcdcdc"/><rect x="6" y="10.6" width="4" height="2.2" fill="#dcdcdc"/><rect x="0" y="12.6" width="5" height="1.8" fill="#2a2a2a"/><path d="M-1 15 L11 15.6 V28 L-1 29z" fill="#e4e8ee"/><rect x="1" y="17" width="2.4" height="3" fill="#9098a8"/><rect x="1" y="22" width="2.4" height="3" fill="#9098a8"/><ellipse cx="8.4" cy="21" rx="1.7" ry="5.4" fill="#3d6a30"/><path d="M11 14.6 L19 12 V28.6 L11 28z" fill="#cfe5dc"/><path d="M19 12 L27 8.4 V29.6 L19 28.6z" fill="#e6ecf5"/><path d="M27 8.4 L36 3.6 V31.4 L27 29.6z" fill="#b6b6e2"/><path d="M36 3.6 L47.5 -1 V33 L36 31.4z" fill="#a9c1e8"/><rect x="30" y="10" width="2.4" height="5" fill="#e8e0ea"/><rect x="30.6" y="19" width="2.6" height="5" fill="#d9c8cc"/><rect x="38" y="7" width="2.6" height="6" fill="#e8eefa"/><rect x="41.6" y="4" width="3" height="7" fill="#7d8698"/><rect x="39" y="17" width="3.4" height="8" fill="#c9d6ee"/><ellipse cx="45" cy="20.4" rx="2.1" ry="9.4" fill="#41702f"/><rect x="47.5" y="-1" width="33.5" height="42" fill="#d6d8da"/><rect x="47.5" y="-1" width="4" height="32" fill="#f1f1f1"/><rect x="52.4" y="0" width="5" height="7" fill="#7f8388"/><rect x="59" y="8" width="16.6" height="19" fill="#f3f3f2"/><rect x="50" y="15.3" width="3.9" height="14.6" fill="#1a1a22"/><rect x="61.8" y="10.5" width="10.9" height="7.2" fill="#8d9094"/><rect x="61.8" y="18.2" width="10.9" height="6.8" fill="#25252b"/><path d="M64.5 10.5 v14.5 M67.2 10.5 v14.5 M69.9 10.5 v14.5 M61.8 14 h10.9 M61.8 21.6 h10.9" stroke="#f0f0ee" stroke-width=".8"/><rect x="76.4" y="9" width="4" height="7" fill="#9a9ca0"/><rect x="76.4" y="17" width="4" height="8" fill="#4a4a50"/><path d="M58 5 L80 1 V3 L58 7.4z" fill="#b8babd"/><rect x="60" y="29.6" width="21" height="5" fill="#e9e9e8"/><path d="M62 29.6 v5 M64.4 29.6 v5 M66.8 29.6 v5 M69.2 29.6 v5 M71.6 29.6 v5 M74 29.6 v5 M76.4 29.6 v5" stroke="#a8aaad" stroke-width=".7"/><rect x="60" y="35" width="21" height="6" fill="#8b8d91"/><rect x="63" y="36" width="9" height="5" fill="#55575c"/><path d="M76 41 L81 37 V41z" fill="#111"/><path d="M-1 29 L12 28 L46 41 H-1z" fill="#8a8682"/><path d="M-1 31 L9 30.4 L9 33 L-1 34.6z" fill="#6a6662"/><path d="M12 28 L47.5 32.4 L56 41 H46z" fill="#b9b3a9"/><path d="M47.5 31 L60 31 V41 H56z" fill="#c9c7c2"/><rect x="26.8" y="28" width="1.2" height="6.6" fill="#2e2a30"/><rect x="43" y="31.8" width="2" height="7.8" fill="#2a2426"/><rect x="21" y="27" width=".9" height="4.6" fill="#3a3640"/><rect x="38" y="33" width="2.6" height="3" fill="#34347a"/></g></svg>
<div class="a" style="left:264px;top:194px;width:392px;height:190px;overflow:hidden">
<span class="t" style="left:87.7px;top:3px;font-size:13.4px;line-height:17px;letter-spacing:-0.02px;">Flat 1 10 Mulberry Place Pinnell Road London SE9 2AB</span><span class="t" style="left:87.7px;top:21px;font-size:13.4px;line-height:17px;letter-spacing:0.39px;font-weight:700;">£395,000</span><span class="t" style="left:146.6px;top:21px;font-size:13.4px;line-height:17px;letter-spacing:0.38px;">, House Available</span>
<span class="t" style="left:87.7px;top:50px;font-size:13.4px;line-height:17px;letter-spacing:0.22px;color:#fff;">46 Crown Walk St Ives Huntingdon PE27 5QN</span><span class="t" style="left:87.7px;top:69px;font-size:13.4px;line-height:17px;letter-spacing:0.39px;font-weight:700;color:#fff;">£385,000</span><span class="t" style="left:146.6px;top:69px;font-size:13.4px;line-height:17px;letter-spacing:0.51px;color:#fff;">, 3 Bed Detached Available</span>
<span class="t" style="left:87.7px;top:97px;font-size:13.4px;line-height:17px;letter-spacing:0.26px;">5 Fullards Close Woodhurst Huntingdon PE28 3BY</span><span class="t" style="left:87.7px;top:116px;font-size:13.4px;line-height:17px;letter-spacing:0.39px;font-weight:700;">£489,995</span><span class="t" style="left:146.6px;top:116px;font-size:13.4px;line-height:17px;letter-spacing:0.55px;">, 4 Bed Detached Available</span>
<span class="t" style="left:87.7px;top:145px;font-size:13.4px;line-height:17px;letter-spacing:0.10px;">12 Enderbys Wharf London Road St Ives PE27 5GH</span><span class="t" style="left:87.7px;top:163px;font-size:13.4px;line-height:17px;letter-spacing:0.39px;font-weight:700;">£389,995</span><span class="t" style="left:146.6px;top:163px;font-size:13.4px;line-height:17px;letter-spacing:0.41px;">, 4 Bed Town House Available</span>
</div>
<span class="t" style="left:716.0px;top:134px;font-size:17px;line-height:21px;letter-spacing:0.50px;">46 Crown Walk St Ives Huntingdon PE27 5QN</span>
<span class="t" style="left:716.0px;top:173px;font-size:13.4px;line-height:17px;letter-spacing:0.07px;font-weight:700;">7 Records Matched</span>
<svg style="left:781px;top:171.5px" width="7" height="15" viewBox="0 0 7 15" ><path d="M.5 .5 Q3.5 .5 3.5 2.5 Q3.5 .5 6.5 .5 M3.5 2.5 V12.5 M.5 14.5 Q3.5 14.5 3.5 12.5 Q3.5 14.5 6.5 14.5" fill="none" stroke="#222" stroke-width="1"/></svg>
<div class="a" style="left:1708px;top:129px;width:49.5px;height:28.5px;background:#c9f6c9;border:1px solid #b4e8b4;border-radius:4px"></div>
<span class="t" style="left:1713.0px;top:135px;font-size:13.4px;line-height:17px;letter-spacing:0.60px;">Active</span>
<div class="a" style="left:1762px;top:129px;width:78.7px;height:28.5px;background:#c9f6c9;border:1px solid #b4e8b4;border-radius:4px"></div>
<span class="t" style="left:1767.5px;top:135px;font-size:13.4px;line-height:17px;letter-spacing:0.54px;">Advertised</span>
<svg style="left:1858.2px;top:132.6px" width="7.4" height="4" viewBox="0 0 7.4 4" ><path d="M0 4 L3.7 0 L7.4 4z" fill="#9a9a9a"/></svg>
<svg style="left:1858.2px;top:880.6px" width="7.4" height="4" viewBox="0 0 7.4 4" ><path d="M0 0 L3.7 4 L7.4 0z" fill="#9a9a9a"/></svg>
<div class="a" style="left:1573.7px;top:167px;width:78.3px;height:31px;background:#ff6b00;border-radius:4px"></div>
<span class="t" style="left:1593.0px;top:173px;font-size:13.4px;line-height:17px;letter-spacing:0.88px;-webkit-text-stroke:.3px;color:#fff;">Match</span>
<div class="a" style="left:1656px;top:167px;width:94px;height:31px;background:#d01517;border-radius:4px"></div>
<span class="t" style="left:1665.0px;top:173px;font-size:13.4px;line-height:17px;letter-spacing:0.07px;-webkit-text-stroke:.3px;color:#fff;">Reset Filters</span>
<div class="btn" style="left:1753.7px;top:167px;width:90.5px;height:31px;background:#f3f3f3;border-color:#e4e4e4"></div>
<span class="t" style="left:1763.7px;top:173px;font-size:13.4px;line-height:17px;letter-spacing:0.31px;color:#9b9b9b;">Send Email</span>
<div class="a" style="left:711.5px;top:203.5px;width:1126px;height:108px;background:#f7f7f7;border-radius:9px;box-shadow:0 0 2px rgba(255,255,255,.8)"></div>
<span class="t" style="left:720.0px;top:209px;font-size:13.4px;line-height:17px;letter-spacing:-0.54px;font-weight:700;">Filters</span>
<div class="a" style="left:720.5px;top:236px;width:1108.5px;height:72px;background:#f0f0f0;border:1px solid #dedede"></div>
<div class="a" style="left:721.5px;top:237px;width:1106.5px;height:26px;background:linear-gradient(#fbfbfb,#f6f6f6 45%,#e5e5e5)"></div>
<span class="t" style="left:725.0px;top:241px;font-size:13.4px;line-height:17px;letter-spacing:0.30px;">Primary Filters</span>
<svg style="left:1805.5px;top:247px" width="11" height="8" viewBox="0 0 11 8"><path d="M1 6.2 L5.4 1.6 L9.8 6.2" fill="none" stroke="#444" stroke-width="1.6" stroke-linecap="round" stroke-linejoin="round"/></svg>
<div class="inp" style="left:725.5px;top:268.7px;width:118.5px;height:29.5px"></div>
<span class="t" style="left:738.0px;top:274px;font-size:13.4px;line-height:17px;letter-spacing:0.52px;">Date Type</span>
<svg style="left:825px;top:280.4px" width="7.6" height="5.4" viewBox="0 0 7.6 5.4" ><path d="M0 0 H7.6 L3.8 5.4z" fill="#333"/></svg>
<div class="inp" style="left:848px;top:268.7px;width:168px;height:29.5px"><div class="spin" style="width:31px"></div></div>
<span class="t" style="left:860.0px;top:274px;font-size:13.4px;line-height:17px;letter-spacing:0.46px;color:#6e6e6e;">Date From</span>
<svg style="left:993px;top:275px" width="14" height="15" viewBox="0 0 14 15" ><rect x=".8" y="2.4" width="12.4" height="11.8" rx="1.4" fill="#fff" stroke="#4a4048" stroke-width="1.3"/><path d="M.8 5.6 h12.4 M3.9 .6 v3 M10.1 .6 v3" stroke="#4a4048" stroke-width="1.3"/><rect x="8" y="9.2" width="3" height="3" fill="#4a4048"/></svg>
<div class="inp" style="left:1020px;top:268.7px;width:168px;height:29.5px"><div class="spin" style="width:31px"></div></div>
<span class="t" style="left:1032.0px;top:274px;font-size:13.4px;line-height:17px;letter-spacing:0.51px;color:#6e6e6e;">Date To</span>
<svg style="left:1165px;top:275px" width="14" height="15" viewBox="0 0 14 15" ><rect x=".8" y="2.4" width="12.4" height="11.8" rx="1.4" fill="#fff" stroke="#4a4048" stroke-width="1.3"/><path d="M.8 5.6 h12.4 M3.9 .6 v3 M10.1 .6 v3" stroke="#4a4048" stroke-width="1.3"/><rect x="8" y="9.2" width="3" height="3" fill="#4a4048"/></svg>
<div class="a" style="left:1199px;top:272.5px;width:1px;height:21px;background:#dcdcdc"></div>
<span class="t" style="left:1212.5px;top:274px;font-size:13.4px;line-height:17px;letter-spacing:-0.21px;">Sort By:</span>
<div class="inp" style="left:1263.7px;top:268.7px;width:118.29999999999995px;height:29.5px"></div>
<span class="t" style="left:1276.0px;top:274px;font-size:13.4px;line-height:17px;letter-spacing:0.01px;">Sort By</span>
<svg style="left:1363px;top:280.4px" width="7.6" height="5.4" viewBox="0 0 7.6 5.4" ><path d="M0 0 H7.6 L3.8 5.4z" fill="#333"/></svg>
<div class="cb" style="left:1385px;top:275px"><svg width="12" height="12" viewBox="0 0 12 12"><path d="M1.6 6.4 L4.6 9.4 L10.6 2.6" fill="none" stroke="#333" stroke-width="1.9"/></svg></div>
<span class="t" style="left:1405.7px;top:274px;font-size:13.4px;line-height:17px;letter-spacing:0.68px;">Ascending</span>
<div class="a" style="left:1490.5px;top:272.5px;width:1px;height:21px;background:#dcdcdc"></div>
<div class="cb off" style="left:1499px;top:275px"></div>
<span class="t" style="left:1519.0px;top:274px;font-size:13.4px;line-height:17px;letter-spacing:0.31px;">My Only</span>
<div class="a" style="left:712px;top:320px;width:1132.5px;height:277px;background:#f6f6f6;border:1px solid #dcdcdc"></div>
<svg style="left:729.5px;top:337.7px" width="7.6" height="8.6" viewBox="0 0 7.6 8.6" ><rect x="0" y="0" width="1.4" height="8.6" fill="#8c8c8c"/><path d="M7.6 0 V8.6 L1.6 4.3z" fill="#8c8c8c"/></svg><svg style="left:763.7px;top:337.7px" width="6.2" height="8.6" viewBox="0 0 6.2 8.6" ><path d="M6.2 0 V8.6 L0 4.3z" fill="#8c8c8c"/></svg><svg style="left:795.7px;top:337.7px" width="6.2" height="8.6" viewBox="0 0 6.2 8.6" ><path d="M0 0 V8.6 L6.2 4.3z" fill="#8c8c8c"/></svg><svg style="left:827.4px;top:337.7px" width="7.6" height="8.6" viewBox="0 0 7.6 8.6" ><rect x="6.2" y="0" width="1.4" height="8.6" fill="#8c8c8c"/><path d="M0 0 V8.6 L6 4.3z" fill="#8c8c8c"/></svg>
<span class="t" style="left:1739.0px;top:333px;font-size:13.4px;line-height:17px;letter-spacing:0.19px;">1 - 7 of 7 items</span>
<div class="a" style="left:713.5px;top:363.5px;width:1130px;height:26px;background:#ececec;border-top:1px solid #e0e0e0;border-bottom:1px solid #dedede"></div>
<div class="a" style="left:713.5px;top:389.5px;width:1113.5px;height:206.5px;background:#fff"></div>
<div class="a" style="left:1013px;top:364px;width:1px;height:232px;background:#e1e1e1"></div>
<div class="a" style="left:1103px;top:364px;width:1px;height:232px;background:#e1e1e1"></div>
<div class="a" style="left:1193px;top:364px;width:1px;height:232px;background:#e1e1e1"></div>
<div class="a" style="left:1253px;top:364px;width:1px;height:232px;background:#e1e1e1"></div>
<div class="a" style="left:1406.7px;top:364px;width:1px;height:232px;background:#e1e1e1"></div>
<div class="a" style="left:1516.7px;top:364px;width:1px;height:232px;background:#e1e1e1"></div>
<div class="a" style="left:1626.7px;top:364px;width:1px;height:232px;background:#e1e1e1"></div>
<div class="a" style="left:1736.7px;top:364px;width:1px;height:232px;background:#e1e1e1"></div>
<div class="a" style="left:1796px;top:364px;width:1px;height:232px;background:#e1e1e1"></div>
<div class="a" style="left:1826.7px;top:364px;width:1px;height:232px;background:#e1e1e1"></div>
<span class="t" style="left:716.0px;top:367px;font-size:13.4px;line-height:17px;letter-spacing:0.21px;">Person</span>
<span class="t" style="left:1017.5px;top:367px;font-size:13.4px;line-height:17px;letter-spacing:0.50px;">Budget From</span>
<span class="t" style="left:1107.5px;top:367px;font-size:13.4px;line-height:17px;letter-spacing:0.55px;">Budget To</span>
<span class="t" style="left:1197.5px;top:367px;font-size:13.4px;line-height:17px;letter-spacing:-0.01px;">Beds</span>
<span class="t" style="left:1258.0px;top:367px;font-size:13.4px;line-height:17px;letter-spacing:0.25px;">Areas</span>
<span class="t" style="left:1410.7px;top:367px;font-size:13.4px;line-height:17px;letter-spacing:0.55px;">Last Contact</span>
<span class="t" style="left:1520.5px;top:367px;font-size:13.4px;line-height:17px;letter-spacing:0.59px;">Next Contact</span>
<span class="t" style="left:1630.5px;top:367px;font-size:13.4px;line-height:17px;letter-spacing:0.38px;">Registered</span>
<span class="t" style="left:1740.7px;top:367px;font-size:13.4px;line-height:17px;letter-spacing:0.56px;">Actions</span>
<div class="cb dk" style="left:1804px;top:369px"></div>
<span class="t u" style="left:725.0px;top:396px;font-size:13.4px;line-height:17px;letter-spacing:0.51px;">I Want A Viewing</span>
<span class="t" style="left:1017.5px;top:396px;font-size:13.4px;line-height:17px;letter-spacing:-0.32px;">£10,000</span>
<span class="t" style="left:1521.7px;top:396px;font-size:13.4px;line-height:17px;letter-spacing:0.36px;">26/10/2022</span>
<span class="t" style="left:1631.7px;top:396px;font-size:13.4px;line-height:17px;letter-spacing:0.36px;">25/10/2022</span>
<div class="btn" style="left:1740px;top:393.90000000000003px;width:51.7px;height:20.6px;background:#f3f3f3;border-color:#e6e6e6"></div>
<svg style="left:1759.1px;top:397.0px" width="14" height="14" viewBox="0 0 14 14" ><g fill="none" stroke="#444" stroke-width="1.1" stroke-linejoin="round"><circle cx="7" cy="7" r="2"/><path d="M5.64 2.82 L5.75 1.13 L8.25 1.13 L8.36 2.82 L9.94 3.73 L11.46 2.99 L12.71 5.15 L11.30 6.09 L11.30 7.91 L12.71 8.85 L11.46 11.01 L9.94 10.27 L8.36 11.18 L8.25 12.87 L5.75 12.87 L5.64 11.18 L4.06 10.27 L2.54 11.01 L1.29 8.85 L2.70 7.91 L2.70 6.09 L1.29 5.15 L2.54 2.99 L4.06 3.73z"/></g></svg>
<div class="cb dk" style="left:1805px;top:395.5px"></div>
<div class="a" style="left:713.5px;top:419.0px;width:1113.5px;height:1px;background:#e1e1e1"></div>
<span class="t u" style="left:725.0px;top:425px;font-size:13.4px;line-height:17px;letter-spacing:0.11px;">Mr Davey123 Weller</span>
<span class="t" style="left:1631.7px;top:425px;font-size:13.4px;line-height:17px;letter-spacing:0.05px;">18/10/2022</span>
<div class="btn" style="left:1740px;top:423.40000000000003px;width:51.7px;height:20.6px;background:#f3f3f3;border-color:#e6e6e6"></div>
<svg style="left:1759.1px;top:426.5px" width="14" height="14" viewBox="0 0 14 14" ><g fill="none" stroke="#444" stroke-width="1.1" stroke-linejoin="round"><circle cx="7" cy="7" r="2"/><path d="M5.64 2.82 L5.75 1.13 L8.25 1.13 L8.36 2.82 L9.94 3.73 L11.46 2.99 L12.71 5.15 L11.30 6.09 L11.30 7.91 L12.71 8.85 L11.46 11.01 L9.94 10.27 L8.36 11.18 L8.25 12.87 L5.75 12.87 L5.64 11.18 L4.06 10.27 L2.54 11.01 L1.29 8.85 L2.70 7.91 L2.70 6.09 L1.29 5.15 L2.54 2.99 L4.06 3.73z"/></g></svg>
<div class="cb dk" style="left:1805px;top:425.0px"></div>
<div class="a" style="left:713.5px;top:448.0px;width:1113.5px;height:1px;background:#e1e1e1"></div>
<span class="t u" style="left:725.0px;top:454px;font-size:13.4px;line-height:17px;letter-spacing:0.10px;">Mr Rental17 Applicant 17</span>
<span class="t" style="left:1411.5px;top:454px;font-size:13.4px;line-height:17px;letter-spacing:-0.34px;">01/01/2021</span>
<span class="t" style="left:1521.7px;top:454px;font-size:13.4px;line-height:17px;letter-spacing:0.44px;">24/05/2021</span>
<span class="t" style="left:1631.7px;top:454px;font-size:13.4px;line-height:17px;letter-spacing:-0.34px;">01/01/2021</span>
<div class="btn" style="left:1740px;top:452.65000000000003px;width:51.7px;height:20.6px;background:#f3f3f3;border-color:#e6e6e6"></div>
<svg style="left:1759.1px;top:455.75px" width="14" height="14" viewBox="0 0 14 14" ><g fill="none" stroke="#444" stroke-width="1.1" stroke-linejoin="round"><circle cx="7" cy="7" r="2"/><path d="M5.64 2.82 L5.75 1.13 L8.25 1.13 L8.36 2.82 L9.94 3.73 L11.46 2.99 L12.71 5.15 L11.30 6.09 L11.30 7.91 L12.71 8.85 L11.46 11.01 L9.94 10.27 L8.36 11.18 L8.25 12.87 L5.75 12.87 L5.64 11.18 L4.06 10.27 L2.54 11.01 L1.29 8.85 L2.70 7.91 L2.70 6.09 L1.29 5.15 L2.54 2.99 L4.06 3.73z"/></g></svg>
<div class="cb dk" style="left:1805px;top:454.5px"></div>
<div class="a" style="left:713.5px;top:477.5px;width:1113.5px;height:1px;background:#e1e1e1"></div>
<span class="t u" style="left:725.0px;top:484px;font-size:13.4px;line-height:17px;letter-spacing:0.39px;">Mr Test</span>
<span class="t" style="left:1631.7px;top:484px;font-size:13.4px;line-height:17px;letter-spacing:0.44px;">16/09/2022</span>
<div class="btn" style="left:1740px;top:482.15000000000003px;width:51.7px;height:20.6px;background:#f3f3f3;border-color:#e6e6e6"></div>
<svg style="left:1759.1px;top:485.25px" width="14" height="14" viewBox="0 0 14 14" ><g fill="none" stroke="#444" stroke-width="1.1" stroke-linejoin="round"><circle cx="7" cy="7" r="2"/><path d="M5.64 2.82 L5.75 1.13 L8.25 1.13 L8.36 2.82 L9.94 3.73 L11.46 2.99 L12.71 5.15 L11.30 6.09 L11.30 7.91 L12.71 8.85 L11.46 11.01 L9.94 10.27 L8.36 11.18 L8.25 12.87 L5.75 12.87 L5.64 11.18 L4.06 10.27 L2.54 11.01 L1.29 8.85 L2.70 7.91 L2.70 6.09 L1.29 5.15 L2.54 2.99 L4.06 3.73z"/></g></svg>
<div class="cb dk" style="left:1805px;top:484.0px"></div>
<div class="a" style="left:713.5px;top:507.0px;width:1113.5px;height:1px;background:#e1e1e1"></div>
<span class="t u" style="left:725.0px;top:513px;font-size:13.4px;line-height:17px;letter-spacing:0.39px;">Mr Tester</span>
<span class="t" style="left:1631.7px;top:513px;font-size:13.4px;line-height:17px;letter-spacing:0.44px;">16/09/2022</span>
<div class="btn" style="left:1740px;top:511.65000000000003px;width:51.7px;height:20.6px;background:#f3f3f3;border-color:#e6e6e6"></div>
<svg style="left:1759.1px;top:514.75px" width="14" height="14" viewBox="0 0 14 14" ><g fill="none" stroke="#444" stroke-width="1.1" stroke-linejoin="round"><circle cx="7" cy="7" r="2"/><path d="M5.64 2.82 L5.75 1.13 L8.25 1.13 L8.36 2.82 L9.94 3.73 L11.46 2.99 L12.71 5.15 L11.30 6.09 L11.30 7.91 L12.71 8.85 L11.46 11.01 L9.94 10.27 L8.36 11.18 L8.25 12.87 L5.75 12.87 L5.64 11.18 L4.06 10.27 L2.54 11.01 L1.29 8.85 L2.70 7.91 L2.70 6.09 L1.29 5.15 L2.54 2.99 L4.06 3.73z"/></g></svg>
<div class="cb dk" style="left:1805px;top:513.5px"></div>
<div class="a" style="left:713.5px;top:536.5px;width:1113.5px;height:1px;background:#e1e1e1"></div>
<div class="a" style="left:716px;top:542.15px;width:4.7px;height:18.4px;background:#0a3cff"></div>
<span class="t u" style="left:725.0px;top:543px;font-size:13.4px;line-height:17px;letter-spacing:0.20px;">Dame Sales 1 Applicant 1</span>
<span class="t" style="left:1017.5px;top:543px;font-size:13.4px;line-height:17px;letter-spacing:0.23px;">£325,000</span>
<span class="t" style="left:1107.5px;top:543px;font-size:13.4px;line-height:17px;letter-spacing:0.37px;">£555,000</span>
<span class="t" style="left:1197.5px;top:543px;font-size:13.4px;line-height:17px;">3</span>
<span class="t" style="left:1411.5px;top:543px;font-size:13.4px;line-height:17px;letter-spacing:-0.34px;">01/01/2021</span>
<span class="t" style="left:1521.7px;top:543px;font-size:13.4px;line-height:17px;letter-spacing:0.44px;">28/05/2021</span>
<span class="t" style="left:1631.7px;top:543px;font-size:13.4px;line-height:17px;letter-spacing:-0.34px;">01/01/2021</span>
<div class="btn" style="left:1740px;top:541.15px;width:51.7px;height:20.6px;background:#f3f3f3;border-color:#e6e6e6"></div>
<svg style="left:1759.1px;top:544.25px" width="14" height="14" viewBox="0 0 14 14" ><g fill="none" stroke="#444" stroke-width="1.1" stroke-linejoin="round"><circle cx="7" cy="7" r="2"/><path d="M5.64 2.82 L5.75 1.13 L8.25 1.13 L8.36 2.82 L9.94 3.73 L11.46 2.99 L12.71 5.15 L11.30 6.09 L11.30 7.91 L12.71 8.85 L11.46 11.01 L9.94 10.27 L8.36 11.18 L8.25 12.87 L5.75 12.87 L5.64 11.18 L4.06 10.27 L2.54 11.01 L1.29 8.85 L2.70 7.91 L2.70 6.09 L1.29 5.15 L2.54 2.99 L4.06 3.73z"/></g></svg>
<div class="cb dk" style="left:1805px;top:543.0px"></div>
<div class="a" style="left:713.5px;top:566.0px;width:1113.5px;height:1px;background:#e1e1e1"></div>
<div class="a" style="left:716px;top:571.65px;width:4.7px;height:18.4px;background:#ff0a0a"></div>
<span class="t u" style="left:725.0px;top:572px;font-size:13.4px;line-height:17px;letter-spacing:0.42px;">Miss Sales 5 Applicant 5</span>
<span class="t" style="left:1017.5px;top:572px;font-size:13.4px;line-height:17px;letter-spacing:0.30px;">£295,000</span>
<span class="t" style="left:1107.5px;top:572px;font-size:13.4px;line-height:17px;letter-spacing:0.16px;">£720,000</span>
<span class="t" style="left:1197.5px;top:572px;font-size:13.4px;line-height:17px;">3</span>
<span class="t" style="left:1411.5px;top:572px;font-size:13.4px;line-height:17px;letter-spacing:-0.34px;">01/01/2021</span>
<span class="t" style="left:1521.7px;top:572px;font-size:13.4px;line-height:17px;letter-spacing:0.55px;">08/06/2021</span>
<span class="t" style="left:1631.7px;top:572px;font-size:13.4px;line-height:17px;letter-spacing:-0.34px;">01/01/2021</span>
<div class="btn" style="left:1740px;top:570.65px;width:51.7px;height:20.6px;background:#f3f3f3;border-color:#e6e6e6"></div>
<svg style="left:1759.1px;top:573.75px" width="14" height="14" viewBox="0 0 14 14" ><g fill="none" stroke="#444" stroke-width="1.1" stroke-linejoin="round"><circle cx="7" cy="7" r="2"/><path d="M5.64 2.82 L5.75 1.13 L8.25 1.13 L8.36 2.82 L9.94 3.73 L11.46 2.99 L12.71 5.15 L11.30 6.09 L11.30 7.91 L12.71 8.85 L11.46 11.01 L9.94 10.27 L8.36 11.18 L8.25 12.87 L5.75 12.87 L5.64 11.18 L4.06 10.27 L2.54 11.01 L1.29 8.85 L2.70 7.91 L2.70 6.09 L1.29 5.15 L2.54 2.99 L4.06 3.73z"/></g></svg>
<div class="cb dk" style="left:1805px;top:572.5px"></div>
<svg style="left:1831.7px;top:397px" width="7.4" height="4" viewBox="0 0 7.4 4" ><path d="M0 4 L3.7 0 L7.4 4z" fill="#9a9a9a"/></svg>
<svg style="left:1831.7px;top:584px" width="7.4" height="4" viewBox="0 0 7.4 4" ><path d="M0 0 L3.7 4 L7.4 0z" fill="#9a9a9a"/></svg>
<div class="ib" style="left:1880px;top:82px"><svg style="left:5.0px;top:5.5px" width="18" height="15" viewBox="0 0 18 15" fill="none" stroke="#56af7c" stroke-width="1.6" stroke-linecap="round" stroke-linejoin="round"><path d="M1.4 1 V14 M17 7.5 H6 M10.6 2.6 L5.6 7.5 L10.6 12.4" stroke-width="2.4"/></svg></div>
<div class="ib" style="left:1880px;top:139px"><svg style="left:6.0px;top:4.5px" width="16" height="19" viewBox="0 0 16 19" fill="none" stroke="#56af7c" stroke-width="1.6" stroke-linecap="round" stroke-linejoin="round"><circle cx="9.4" cy="2" r="1.7" fill="#56af7c" stroke="none"/><path d="M3.4 9 L5.2 5.8 L8.6 5 L10.6 8.2 L13.6 9.4 M8.4 5.2 L7.4 10.4 L10.4 13.4 L11.2 17.6 M7.2 10.8 L5.4 14.6 L2.6 17.6" stroke-width="1.7"/></svg></div>
<div class="ib" style="left:1880px;top:175px"><svg style="left:6.0px;top:5.0px" width="16" height="18" viewBox="0 0 16 18" fill="none" stroke="#56af7c" stroke-width="1.6" stroke-linecap="round" stroke-linejoin="round"><path d="M12.6 4.2 Q12 1 8.8 1 Q5.4 1 5.4 5 V14.4 Q5.4 16.6 2.4 17 H13.6 M2.4 9.4 H10.6" stroke-width="2"/></svg></div>
<div class="ib" style="left:1880px;top:211px"><svg style="left:3.5px;top:4.0px" width="21" height="20" viewBox="0 0 21 20" fill="none" stroke="#56af7c" stroke-width="1.6" stroke-linecap="round" stroke-linejoin="round"><text x="10" y="8" font-family="Liberation Sans, sans-serif" font-size="11" font-weight="700" fill="#56af7c" stroke="none" text-anchor="middle">$</text><path d="M1 19 H11 Q16 18.6 19.6 14.2 Q18 12.2 15.4 14.2 L12.8 15.8 H8 M1 12.6 H5 Q7.6 11 10.4 12.6 H13 Q14.8 14 13 15.8" stroke-width="1.8"/></svg></div>
<div class="ib" style="left:1880px;top:248px"><svg style="left:5.0px;top:4.0px" width="18" height="20" viewBox="0 0 18 20" fill="none" stroke="#56af7c" stroke-width="1.6" stroke-linecap="round" stroke-linejoin="round"><circle cx="9" cy="5.2" r="4.2"/><path d="M1.4 17.4 V15.6 Q1.4 12 5.4 11.6 Q9 13.4 12.6 11.6 Q16.6 12 16.6 15.6 V17.4 Q16.6 18.4 15.6 18.4 H2.4 Q1.4 18.4 1.4 17.4z"/></svg></div>
<div class="ib" style="left:1880px;top:284px"><svg style="left:3.0px;top:4.0px" width="22" height="20" viewBox="0 0 22 20" fill="none" stroke="#56af7c" stroke-width="1.6" stroke-linecap="round" stroke-linejoin="round"><path d="M1 10.2 L11 1.2 L21 10.2 M3.8 8.4 V18.6 H18.2 V8.4 M16.6 2.4 V5.8" stroke-width="1.7"/><rect x="9" y="12" width="4" height="6.6" fill="#56af7c" stroke-width="1"/></svg></div>
<div class="ib" style="left:1880px;top:321px"><svg style="left:6.0px;top:4.0px" width="16" height="20" viewBox="0 0 16 20" fill="none" stroke="#56af7c" stroke-width="1.6" stroke-linecap="round" stroke-linejoin="round"><path d="M2 1 H10.4 L15 5.6 V18 Q15 19 14 19 H2 Q1 19 1 18 V2 Q1 1 2 1z M10.2 1.2 V5.8 H14.8 M3.8 5 H7.6 M3.8 7.8 H7.6 M9.4 16 H12.4"/><rect x="3.8" y="10.4" width="8.4" height="3.4"/></svg></div>
<div class="ib" style="left:1880px;top:743px"><svg style="left:4.0px;top:4.0px" width="20" height="20" viewBox="0 0 20 20" fill="none" stroke="#56af7c" stroke-width="1.6" stroke-linecap="round" stroke-linejoin="round"><circle cx="10" cy="10" r="3"/><path d="M7.99 3.82 L8.15 1.29 L11.85 1.29 L12.01 3.82 L14.35 5.17 L16.61 4.04 L18.46 7.25 L16.36 8.65 L16.36 11.35 L18.46 12.75 L16.61 15.96 L14.35 14.83 L12.01 16.18 L11.85 18.71 L8.15 18.71 L7.99 16.18 L5.65 14.83 L3.39 15.96 L1.54 12.75 L3.64 11.35 L3.64 8.65 L1.54 7.25 L3.39 4.04 L5.65 5.17z"/></svg></div>
<div class="ib" style="left:1880px;top:779px"><svg style="left:4.0px;top:4.0px" width="20" height="20" viewBox="0 0 20 20" fill="none" stroke="#56af7c" stroke-width="1.6" stroke-linecap="round" stroke-linejoin="round"><circle cx="10" cy="10" r="8.8" stroke-width="1.5"/><path d="M7.2 7.6 Q7.4 5.2 10 5.2 Q12.8 5.2 12.8 7.6 Q12.8 9.2 10.6 10 Q10 10.4 10 11.8" stroke-width="1.9"/><circle cx="10" cy="14.6" r="1.1" fill="#56af7c" stroke="none"/></svg></div>
<div class="ib" style="left:1880px;top:816px"><svg style="left:5.0px;top:4.0px" width="18" height="20" viewBox="0 0 18 20" fill="none" stroke="#56af7c" stroke-width="1.6" stroke-linecap="round" stroke-linejoin="round"><path d="M3 18.6 V1.4 H15 V18.6 M1 18.6 H17" stroke-width="1.7"/><rect x="5.2" y="4.0" width="1.4" height="1.6" fill="#56af7c" stroke="none"/><rect x="8.4" y="4.0" width="1.4" height="1.6" fill="#56af7c" stroke="none"/><rect x="11.600000000000001" y="4.0" width="1.4" height="1.6" fill="#56af7c" stroke="none"/><rect x="5.2" y="7.6" width="1.4" height="1.6" fill="#56af7c" stroke="none"/><rect x="8.4" y="7.6" width="1.4" height="1.6" fill="#56af7c" stroke="none"/><rect x="11.600000000000001" y="7.6" width="1.4" height="1.6" fill="#56af7c" stroke="none"/><rect x="5.2" y="11.2" width="1.4" height="1.6" fill="#56af7c" stroke="none"/><rect x="11.600000000000001" y="11.2" width="1.4" height="1.6" fill="#56af7c" stroke="none"/><rect x="7.8" y="14.4" width="2.4" height="4" fill="#56af7c" stroke="none"/></svg></div>
<div class="ib" style="left:1880px;top:852px"><svg style="left:5.0px;top:3.8000000000000007px" width="18" height="20.4" viewBox="0 0 18 20.4" fill="none" stroke="#56af7c" stroke-width="1.6" stroke-linecap="round" stroke-linejoin="round"><path d="M9 1 L16.6 3.8 V9 Q16.6 15.6 9 19.4 Q1.4 15.6 1.4 9 V3.8z" stroke-width="1.6"/><path d="M9 4.4 L4.4 6.2 V9.4 Q4.6 13.2 9 15.8z" fill="#56af7c" stroke="none"/></svg></div>
<div class="a" style="left:0;top:887px;width:1920px;height:50px;background:#fff;border-top:1px solid #c9c9c9"></div>
<svg style="left:0;top:885px" width="64" height="52" viewBox="0 0 64 52" fill="none" stroke="#5bb183" stroke-width="5" stroke-linecap="round"><path d="M36.5 39.5 L24.3 24.4 A10.3 10.3 0 1 1 38.7 24.4 L26.5 39.5"/><circle cx="15.6" cy="35.8" r="11.2"/><path d="M54.6 44.4 A11.2 11.2 0 0 1 39 43 M57.6 31 A11.2 11.2 0 0 0 37 31.4" /><path d="M36.6 31.8 A11.2 11.2 0 0 0 39.4 43.4" stroke-linecap="butt"/><path d="M57.4 30.6 A11.2 11.2 0 0 1 58.5 37.6" stroke-linecap="butt"/><circle cx="57" cy="43.6" r="2.7" fill="#2b2f3c" stroke="none"/></svg>
<span class="t" style="left:70.2px;top:883px;font-size:32.4px;line-height:40px;font-weight:700;color:#2b2f3c;transform-origin:0 0;transform:scaleX(1.0523);-webkit-text-stroke:.7px;">EstatesIT</span>
<span class="t" style="left:69.6px;top:917px;font-size:18.2px;line-height:23px;color:#3a3d48;transform-origin:0 0;transform:scaleX(1.0665);">Software</span>
<div class="a" style="left:1127.5px;top:890px;width:1px;height:45px;background:#cfcfcf"></div>
<span class="t" style="left:1333.0px;top:895px;font-size:13.4px;line-height:17px;letter-spacing:0.47px;color:#7a7a7a;">Dave</span>
<span class="t" style="left:1148.0px;top:912px;font-size:13.4px;line-height:17px;letter-spacing:0.46px;color:#7a7a7a;">Estate-Agents-Property.co.uk (B1)</span>
<div class="a" style="left:1382.5px;top:896px;width:1px;height:33px;background:#dadada"></div>
<span class="t" style="left:1486.7px;top:895px;font-size:13.4px;line-height:17px;letter-spacing:0.08px;color:#7a7a7a;">Live Build</span>
<span class="t" style="left:1403.0px;top:912px;font-size:13.4px;line-height:17px;letter-spacing:-0.13px;color:#7a7a7a;">Version: 1.1.8360.22364</span>
<div class="a" style="left:1561.7px;top:896px;width:1px;height:33px;background:#dadada"></div>
<span class="t" style="left:1605.6px;top:895px;font-size:13.4px;line-height:17px;letter-spacing:0.03px;color:#7a7a7a;">Estates IT Ltd © 2022</span>
<span class="t" style="left:1583.0px;top:912px;font-size:13.4px;line-height:17px;letter-spacing:-0.06px;font-weight:700;color:#6a6a6a;">Our Terms &amp; Conditions</span>
<div class="a" style="left:1752.6px;top:896px;width:1px;height:33px;background:#dadada"></div>
<svg style="left:1770px;top:903px" width="25" height="18" viewBox="0 0 25 18" ><rect width="25" height="18" rx="4.6" fill="#8a8a8a"/><path d="M10 5 L16.4 9 L10 13z" fill="#fff"/></svg>
<svg style="left:1813px;top:900px" width="13" height="24" viewBox="0 0 13 24" ><path d="M8.6 24 V13.4 H12 L12.6 9.2 H8.6 V6.6 Q8.6 4.4 10.8 4.4 H12.8 V.6 Q11.4 .3 9.6 .3 Q4.4 .3 4.4 6 V9.2 H.6 V13.4 H4.4 V24z" fill="#8a8a8a"/></svg>
<svg style="left:1843.5px;top:902.3px" width="23" height="19" viewBox="0 0 23 19" ><path d="M22.6 2.3 Q21.6 2.8 20.2 3 Q21.6 2 22 .6 Q20.6 1.4 19.2 1.6 Q17.8 .1 15.8 .1 Q11.6 .5 11.4 4.6 L11.5 5.6 Q5.6 5.3 1.8 .8 Q.2 4.2 3.2 6.8 Q2 6.8 1.2 6.2 Q1.4 9.8 4.8 10.8 Q3.8 11.1 2.8 10.9 Q3.8 13.8 7 14 Q4.2 16.2 .3 15.8 Q3.6 18.7 8.4 18.7 Q19.4 17.6 20.4 5.6 V4.8 Q21.8 3.8 22.6 2.3z" fill="#8a8a8a"/></svg>
<svg style="left:1883px;top:899.5px" width="21.5" height="21" viewBox="0 0 21.5 21" ><circle cx="2.6" cy="2.6" r="2.6" fill="#8a8a8a"/><rect x=".4" y="7" width="4.4" height="13.8" fill="#8a8a8a"/><path d="M8 7 H12.2 V8.9 Q13.6 6.7 16.4 6.7 Q21.3 6.7 21.3 12.6 V20.8 H16.9 V13.4 Q16.9 10.4 14.8 10.4 Q12.4 10.4 12.4 13.4 V20.8 H8z" fill="#8a8a8a"/></svg>
<svg style="left:730px;top:51.5px;filter:drop-shadow(2px 3px 3px rgba(0,0,0,.45))" width="140" height="88" viewBox="-10 -10 140 88"><path d="M0 12.5 H91 V0 L116 31.8 L91 63.5 V51.5 H0z" fill="#f5855f"/><text x="45.6" y="41.2" text-anchor="middle" font-family="Liberation Sans, sans-serif" font-size="23" fill="#fff">1</text></svg>
<svg style="left:144px;top:229px;filter:drop-shadow(2px 3px 3px rgba(0,0,0,.45))" width="140" height="88" viewBox="-10 -10 140 88"><path d="M0 12.5 H91 V0 L116 31.8 L91 63.5 V51.5 H0z" fill="#f5855f"/><text x="45.6" y="41.2" text-anchor="middle" font-family="Liberation Sans, sans-serif" font-size="23" fill="#fff">1</text></svg>
</body></html>
